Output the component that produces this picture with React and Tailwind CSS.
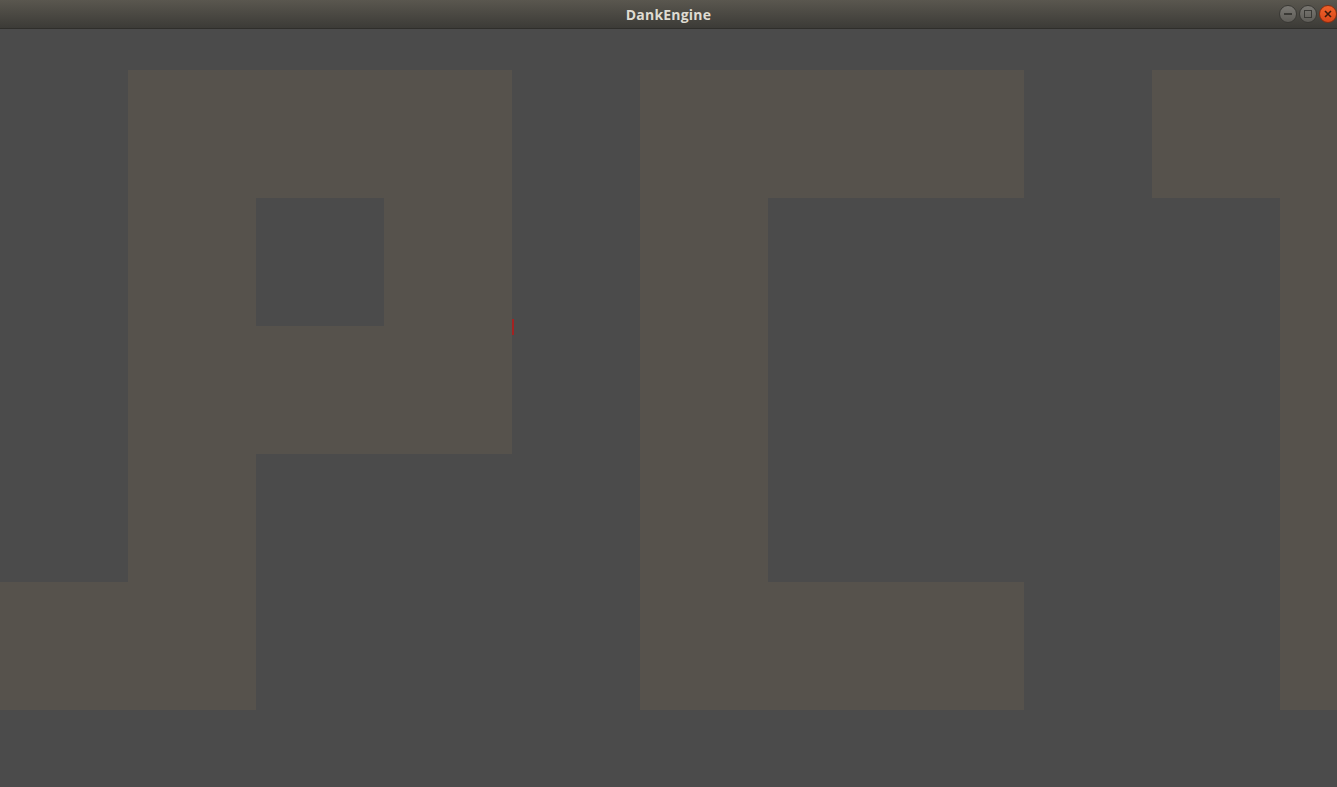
import React from "react";

const T = "bg-[#56524c]";
const B = "bg-[#4b4b4b]";

// rows of 11 columns (128px each), 1 = tan
const rows = [
  [0, 1, 1, 1, 0, 1, 1, 1, 0, 1, 1],
  [0, 1, 0, 1, 0, 1, 0, 0, 0, 0, 1],
  [0, 1, 1, 1, 0, 1, 0, 0, 0, 0, 1],
  [0, 1, 0, 0, 0, 1, 0, 0, 0, 0, 1],
  [1, 1, 0, 0, 0, 1, 1, 1, 0, 0, 1],
];

export default function App() {
  return (
    <div className="w-[1337px] h-[787px] overflow-hidden flex flex-col bg-[#4b4b4b]">
      <div className="relative h-[29px] shrink-0 flex items-center justify-center bg-gradient-to-b from-[#5a574f] to-[#3c3b37] border-b border-[#2f2e2b]">
        <span className="text-[14px] font-bold text-[#dfdbd2] font-['Open_Sans',sans-serif] tracking-[0.2px]">
          DankEngine
        </span>
        <div className="absolute right-0 top-[5px] flex items-center gap-[2px]">
          <div className="w-[18px] h-[18px] rounded-full bg-gradient-to-b from-[#7a7873] to-[#5e5c57] border border-[#3a3935] flex items-center justify-center">
            <div className="w-[8px] h-[2px] bg-[#3a3935]" />
          </div>
          <div className="w-[18px] h-[18px] rounded-full bg-gradient-to-b from-[#7a7873] to-[#5e5c57] border border-[#3a3935] flex items-center justify-center">
            <div className="w-[8px] h-[8px] border-[1.5px] border-[#3a3935]" />
          </div>
          <div className="w-[18px] h-[18px] rounded-full bg-gradient-to-b from-[#f0622b] to-[#d9471a] border border-[#8a2d10] flex items-center justify-center">
            <svg width="8" height="8" viewBox="0 0 8 8">
              <path d="M1 1L7 7M7 1L1 7" stroke="#3a1a0c" strokeWidth="1.6" />
            </svg>
          </div>
        </div>
      </div>
      <div className="relative flex-1 overflow-hidden">
        <div className="mt-[41px] flex flex-col">
          {rows.map((r, i) => (
            <div key={i} className="flex">
              {r.map((c, j) => (
                <div key={j} className={`w-[128px] h-[128px] shrink-0 ${c ? T : B}`} />
              ))}
            </div>
          ))}
        </div>
        <div className="absolute left-[512px] top-[290px] w-[2px] h-[16px] bg-[#a32222]" />
      </div>
    </div>
  );
}
